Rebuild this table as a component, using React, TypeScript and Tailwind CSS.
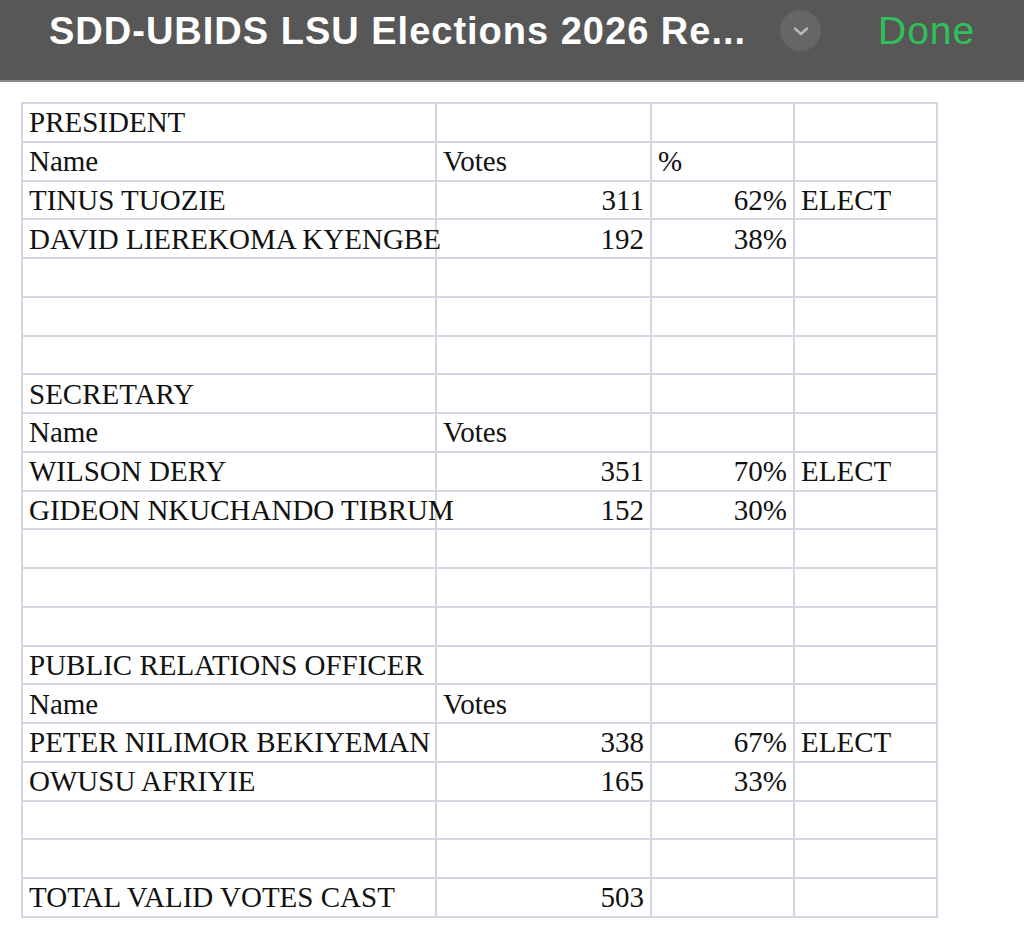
const rows: [string, string, string, string][] = [
  ['PRESIDENT', '', '', ''],
  ['Name', 'Votes', '%', ''],
  ['TINUS TUOZIE', '311', '62%', 'ELECT'],
  ['DAVID LIEREKOMA KYENGBE', '192', '38%', ''],
  ['', '', '', ''],
  ['', '', '', ''],
  ['', '', '', ''],
  ['SECRETARY', '', '', ''],
  ['Name', 'Votes', '', ''],
  ['WILSON DERY', '351', '70%', 'ELECT'],
  ['GIDEON NKUCHANDO TIBRUM', '152', '30%', ''],
  ['', '', '', ''],
  ['', '', '', ''],
  ['', '', '', ''],
  ['PUBLIC RELATIONS OFFICER', '', '', ''],
  ['Name', 'Votes', '', ''],
  ['PETER NILIMOR BEKIYEMAN', '338', '67%', 'ELECT'],
  ['OWUSU AFRIYIE', '165', '33%', ''],
  ['', '', '', ''],
  ['', '', '', ''],
  ['TOTAL VALID VOTES CAST', '503', '', ''],
]

const isNum = (s: string) => /^\d+%?$/.test(s)

export default function App() {
  return (
    <div className="w-[1024px] h-[934px] bg-white overflow-hidden">
      {/* Top bar */}
      <div className="h-[82px] bg-[#575757] border-b-2 border-[#8a8a8a] flex items-start pt-[9px] pl-[49px]" style={{ fontFamily: '"Liberation Sans", Arial, sans-serif' }}>
        <div className="text-white text-[38px] font-bold tracking-[1px] leading-[44px] w-[731px] whitespace-nowrap">
          SDD-UBIDS LSU Elections 2026 Re...
        </div>
        <div className="mt-[1px] w-[41px] h-[41px] rounded-full bg-[#666666] flex items-center justify-center">
          <svg width="18" height="12" viewBox="0 0 18 12" fill="none">
            <path d="M3 3.5 L9 9 L15 3.5" stroke="#b9b9b9" strokeWidth="2.4" strokeLinecap="round" strokeLinejoin="round" />
          </svg>
        </div>
        <div className="ml-[57px] text-[#2fc159] text-[39px] tracking-[1px] leading-[44px]">Done</div>
      </div>

      {/* Sheet */}
      <div className="pl-[21px] pt-[20px]">
        <table className="table-fixed border-collapse w-[915px]" style={{ fontFamily: '"Liberation Serif", "Times New Roman", serif' }}>
          <colgroup>
            <col className="w-[414px]" />
            <col className="w-[215px]" />
            <col className="w-[143px]" />
            <col className="w-[143px]" />
          </colgroup>
          <tbody>
            {rows.map((r, i) => (
              <tr key={i} className="h-[38.76px]">
                {r.map((c, j) => (
                  <td
                    key={j}
                    className={`border-[2.5px] border-[#d6d6e2] px-[6px] p-0 text-[29px] leading-[32px] text-[#111] whitespace-nowrap overflow-visible ${
                      isNum(c) ? 'text-right' : 'text-left'
                    }`}
                  >
                    <div className="relative z-10">{c}</div>
                  </td>
                ))}
              </tr>
            ))}
          </tbody>
        </table>
      </div>
    </div>
  )
}
